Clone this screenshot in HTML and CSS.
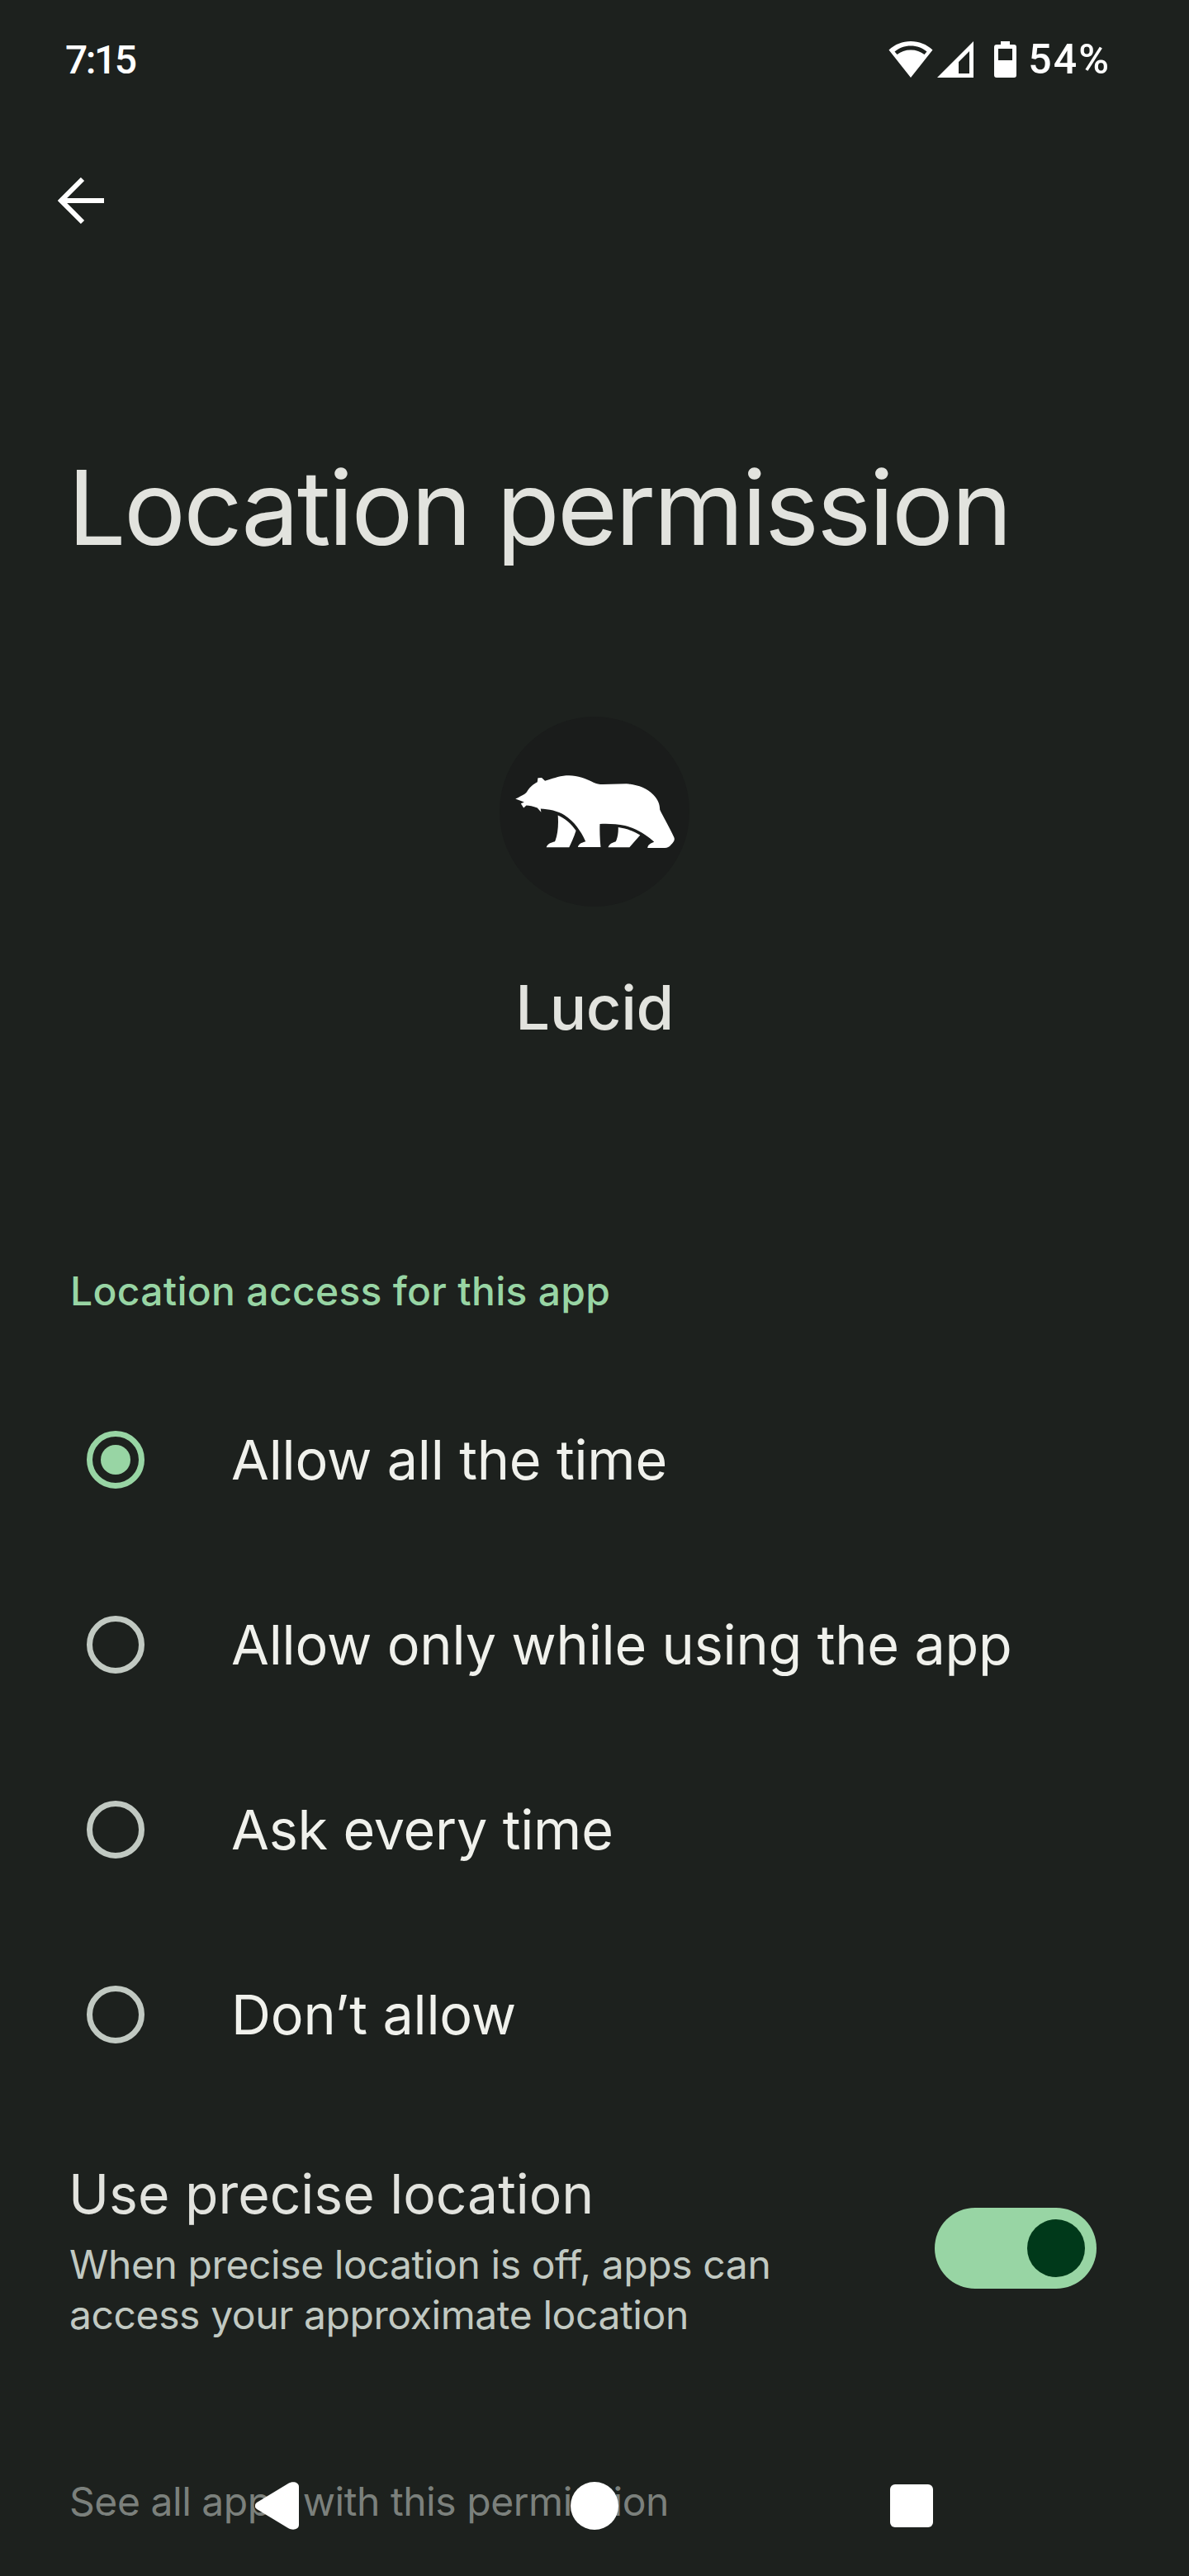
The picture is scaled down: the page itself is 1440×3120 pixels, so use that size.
FILE: index.html
```html
<!DOCTYPE html>
<html lang="en">
<head>
	<meta charset="UTF-8">
	<meta name="viewport" content="width=device-width">
	<title>Location permission</title>
	<link rel="stylesheet" href="styles.css">
</head>
<body>
<div class="screen">

	<header class="status-bar">
		<span class="status-time">7:15</span>
		<div class="status-icons">
			<svg class="icon-wifi" viewBox="0 0 54 44" width="54" height="44"><path fill="#fff" fill-rule="evenodd" d="M27 0C17 0 8 3.500 0.500 10.500L27 44L53.500 10.500C46 3.500 37 0 27 0ZM27 5.500C34.500 5.500 41 8 46.500 12.500L43.500 16C39 12.500 33.500 10.500 27 10.500C20.500 10.500 15 12.500 10.500 16L7.500 12.500C13 8 19.500 5.500 27 5.500Z"/></svg>
			<svg class="icon-signal" viewBox="0 0 44 44" width="44" height="44"><path fill="#fff" fill-rule="evenodd" d="M44 0V44H0ZM39 12L26 25V39H39Z"/></svg>
			<svg class="icon-battery" viewBox="0 0 27 44" width="27" height="44"><path fill="#fff" fill-rule="evenodd" d="M8 0H19V4H24C26 4 27 5 27 7V41C27 43 26 44 24 44H3C1 44 0 43 0 41V7C0 5 1 4 3 4H8ZM5 9V23H22V9Z"/></svg>
			<span class="status-pct">54%</span>
		</div>
	</header>

	<div class="toolbar">
		<svg class="back-arrow" viewBox="0 0 56 56" width="56" height="56"><path fill="none" stroke="#fff" stroke-width="6" d="M56 28H5M30 2L4 28L30 54"/></svg>
	</div>

	<h1 class="page-title">Location permission</h1>

	<div class="app-header">
		<div class="app-icon">
			<!-- bear logo, traced by eye from the screenshot -->
			<svg viewBox="130 262 580 265" width="193" height="88"><path fill="#fff" d="M130 348C145 340 165 332 172 322C180 308 195 295 210 287L212 272L226 271L238 282C265 276 285 265 315 263C350 260 385 272 415 288C425 293 435 295 450 295L535 293C575 296 610 310 632 332C650 350 657 368 657 388C668 412 692 452 708 487C713 497 708 505 698 515C690 524 685 527 675 527H612C612 518 620 510 636 505C610 482 575 458 530 446C500 440 465 438 438 440C437 465 438 495 441 524H358C360 514 370 508 386 504C372 470 345 430 310 408C285 392 250 385 222 384L224 397L210 381C195 375 180 373 170 372L160 381L150 365L162 360Z"/><path fill="#fff" d="M285 408C310 418 335 440 351 464C345 485 335 505 326 525H243C246 514 258 508 274 504C284 480 288 445 285 408Z"/><path fill="#fff" d="M505 452C535 456 562 466 585 480L546 525H468C472 514 482 508 496 504C503 490 506 470 505 452Z"/></svg>
		</div>
		<div class="app-name">Lucid</div>
	</div>

	<section class="access-section">
		<h2 class="section-label">Location access for this app</h2>
		<div class="radio-row">
			<span class="radio radio-on"></span>
			<span class="radio-label">Allow all the time</span>
		</div>
		<div class="radio-row">
			<span class="radio"></span>
			<span class="radio-label">Allow only while using the app</span>
		</div>
		<div class="radio-row">
			<span class="radio"></span>
			<span class="radio-label">Ask every time</span>
		</div>
		<div class="radio-row">
			<span class="radio"></span>
			<span class="radio-label">Don’t allow</span>
		</div>
	</section>

	<section class="precise-row">
		<div class="precise-text">
			<div class="precise-title">Use precise location</div>
			<div class="precise-sub">When precise location is off, apps can<br>access your approximate location</div>
		</div>
		<div class="toggle"><span class="toggle-thumb"></span></div>
	</section>

	<div class="see-all">See all apps with this permission</div>

	<nav class="nav-bar">
		<svg viewBox="0 0 53 58" width="53" height="58"><path fill="#fff" d="M2 25L40 2C45 -1 53 0 53 6V52C53 58 45 59 40 56L2 33C-1 31 -1 27 2 25Z"/></svg>
		<span class="nav-home"></span>
		<span class="nav-recent"></span>
	</nav>

</div>
</body>
</html>
```

FILE: styles.css
```css
html, body {
	margin: 0;
	padding: 0;
	background: #1d211e;
}

.screen {
	width: 1440px;
	height: 3120px;
	position: relative;
	overflow: hidden;
	background: #1d211e;
	font-family: "Inter", "Liberation Sans", sans-serif;
	color: #e2e3de;
}

/* status bar */
.status-bar {
	height: 144px;
	padding: 0 95px 0 79px;
	box-sizing: border-box;
	display: flex;
	justify-content: space-between;
	align-items: center;
	color: #fff;
	font-family: "Roboto", sans-serif;
	font-weight: 500;
	font-size: 48px;
}

.status-time { letter-spacing: -2.500px; }

.status-icons {
	display: flex;
	align-items: center;
}

.icon-signal { margin-left: 5px; }
.icon-battery { margin-left: 25px; }
.status-pct { margin-left: 14px; letter-spacing: 2px; font-size: 50px; }

.toolbar {
	height: 198px;
	padding-left: 70px;
	display: flex;
	align-items: center;
	box-sizing: border-box;
}

.page-title {
	margin: 188px 0 0;
	padding-left: 82px;
	font-size: 125px;
	font-weight: 400;
	line-height: 170px;
	height: 170px;
	color: #e2e3de;
	letter-spacing: -2.700px;
}

.app-header {
	margin-top: 168px;
	display: flex;
	flex-direction: column;
	align-items: center;
}

.app-icon {
	width: 230px;
	height: 230px;
	border-radius: 50%;
	background: #1a1c1b;
	display: flex;
	align-items: center;
	justify-content: center;
	box-sizing: border-box;
}

.app-name {
	margin-top: 72px;
	font-size: 74px;
	line-height: 100px;
	font-weight: 500;
	letter-spacing: -0.400px;
}

.access-section {
	margin-top: 259px;
}

.section-label {
	margin: 0;
	padding-left: 85px;
	font-size: 48px;
	font-weight: 500;
	letter-spacing: 0.300px;
	line-height: 70px;
	color: #98d5a4;
}

.radio-row {
	height: 224px;
	display: flex;
	align-items: center;
	padding-left: 105px;
}

.radio-row:first-of-type { margin-top: 57px; }

.radio {
	width: 70px;
	height: 70px;
	box-sizing: border-box;
	border: 7px solid #c1c9c2;
	border-radius: 50%;
	display: flex;
	align-items: center;
	justify-content: center;
	flex-shrink: 0;
}

.radio-on {
	border-color: #98d5a4;
}

.radio-on::after {
	content: "";
	width: 36px;
	height: 36px;
	border-radius: 50%;
	background: #98d5a4;
}

.radio-label {
	margin-left: 105px;
	font-size: 66.500px;
	letter-spacing: -0.200px;
	color: #f0f1ec;
}

.precise-row {
	margin-top: 60px;
	padding: 0 112px 0 83px;
	display: flex;
	justify-content: space-between;
	align-items: center;
}

.precise-title {
	font-size: 66px;
	line-height: 90px;
	color: #e2e3de;
}

.precise-sub {
	margin-top: 10px;
	padding-left: 1px;
	font-size: 48px;
	letter-spacing: -0.400px;
	line-height: 61px;
	color: #c1c9c2;
}

.toggle {
	width: 196px;
	height: 98px;
	border-radius: 49px;
	background: #98d5a4;
	display: flex;
	align-items: center;
	justify-content: flex-end;
	padding-right: 14px;
	box-sizing: border-box;
}

.toggle-thumb {
	width: 70px;
	height: 70px;
	border-radius: 50%;
	background: #00391a;
}

.see-all {
	margin-top: 161px;
	padding-left: 84px;
	font-size: 48px;
	letter-spacing: -0.450px;
	line-height: 70px;
	color: #7b807c;
}

.nav-bar {
	position: absolute;
	left: 309px;
	right: 310px;
	bottom: 55px;
	height: 60px;
	display: flex;
	justify-content: space-between;
	align-items: center;
}

.nav-home {
	width: 58px;
	height: 58px;
	border-radius: 50%;
	background: #fff;
}

.nav-recent {
	width: 52px;
	height: 52px;
	border-radius: 6px;
	background: #fff;
}
```
